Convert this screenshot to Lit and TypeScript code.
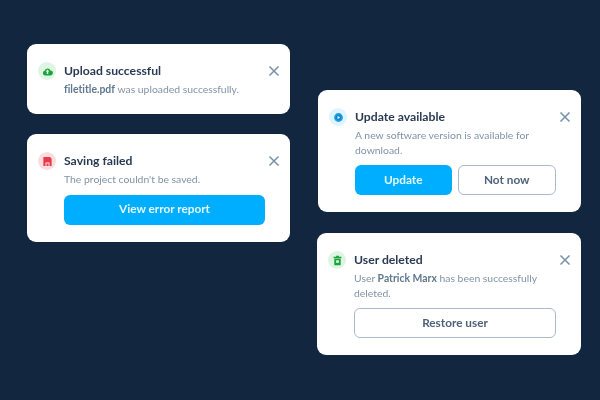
import { customElement } from "lit/decorators.js";
import { css, html, LitElement, svg } from "lit";

const cloudIcon = svg`<path fill="#1aa33a" d="M3.200 10.400a2.600 2.600 0 0 1-.3-5.100 3.300 3.300 0 0 1 6.300-.5 2.800 2.800 0 0 1-.2 5.600z"/><path fill="#e6f7e9" d="M6 3.800l2 2.300H6.800v2.600H5.200V6.100H4z"/>`;
const saveIcon = svg`<path fill="#e8394a" d="M1.500 1.200h7.300l1.700 1.700v7.900h-9z"/><path fill="#fbdcdf" d="M3.800 7h4.400v3.800H3.800z"/><path fill="#e8394a" d="M4.900 8.200h2.200v2.600H4.900z"/>`;
const updateIcon = svg`<circle cx="6" cy="6" r="4.800" fill="#1a9fe4"/><circle cx="6" cy="6" r="2.900" fill="#0f86cc"/><path fill="#dff4fe" d="M5 4l2.800 2L5 8z"/>`;
const trashIcon = svg`<path fill="#1aa33a" d="M4.500 .8h3V2h2.800v1.500H1.700V2h2.800zM2.500 4.200h7v6.900h-7z"/><path fill="#e6f7e9" d="M4.500 5.800h3v2.700h-3z"/>`;

@customElement("app-root")
export class AppRoot extends LitElement {
  private _icon(tone: string, glyph: unknown) {
    return html`<div class="icon ${tone}">
      <svg width="11" height="11" viewBox="0 0 12 12">${glyph}</svg>
    </div>`;
  }

  private _head(title: string) {
    return html`<div class="head">
      <div class="title">${title}</div>
      <svg class="close" width="12" height="12" viewBox="0 0 12 12">
        <path d="M1.500 1.500l9 9M10.500 1.500l-9 9" stroke="#7690a8" stroke-width="1.500" fill="none" />
      </svg>
    </div>`;
  }

  render() {
    return html`<div class="page">
      <div class="column left">
        <div class="card">
          ${this._icon("green", cloudIcon)}
          <div class="body">
            ${this._head("Upload successful")}
            <p><b>filetitle.pdf</b> was uploaded successfully.</p>
          </div>
        </div>
        <div class="card report">
          ${this._icon("red", saveIcon)}
          <div class="body">
            ${this._head("Saving failed")}
            <p>The project couldn't be saved.</p>
            <div class="actions">
              <button class="primary">View error report</button>
            </div>
          </div>
        </div>
      </div>
      <div class="column right">
        <div class="card">
          ${this._icon("blue", updateIcon)}
          <div class="body">
            ${this._head("Update available")}
            <p>A new software version is available for download.</p>
            <div class="actions">
              <button class="primary">Update</button>
              <button class="outline">Not now</button>
            </div>
          </div>
        </div>
        <div class="card shifted">
          ${this._icon("green", trashIcon)}
          <div class="body">
            ${this._head("User deleted")}
            <p>User <b>Patrick Marx</b> has been successfully deleted.</p>
            <div class="actions">
              <button class="outline">Restore user</button>
            </div>
          </div>
        </div>
      </div>
    </div>`;
  }

  static styles = css`
    :host {
      display: block;
      font-family: Lato, "Open Sans", sans-serif;
      font-variant-ligatures: none;
    }

    .page {
      display: flex;
      gap: 28px;
      box-sizing: border-box;
      width: 600px;
      height: 400px;
      padding-left: 27px;
      background: #12263f;
      overflow: hidden;
    }

    .column {
      display: flex;
      flex-direction: column;
      width: 263px;
      flex: none;
    }

    .left {
      gap: 20.5px;
      padding-top: 44px;
    }

    .right {
      gap: 21px;
      padding-top: 90px;
    }

    .card {
      display: flex;
      align-items: flex-start;
      gap: 8px;
      padding: 18px 25px 17px 11px;
      background: #fff;
      border-radius: 9px;
      filter: blur(0.4px);
    }

    .shifted {
      margin-left: -1px;
    }

    .report .actions {
      margin-top: 8px;
    }

    .icon {
      display: flex;
      align-items: center;
      justify-content: center;
      flex: none;
      width: 18px;
      height: 18px;
      border-radius: 50%;
    }

    .green {
      background: #dff5e3;
    }

    .red {
      background: #fbdcdf;
    }

    .blue {
      background: #dff4fe;
    }

    .body {
      flex: 1;
      min-width: 0;
    }

    .head {
      display: flex;
      align-items: center;
      justify-content: space-between;
      height: 18px;
    }

    .title {
      padding-bottom: 2px;
      font-size: 12.2px;
      font-weight: 700;
      color: #2a3a52;
    }

    .close {
      margin-right: -15px;
    }

    p {
      margin: 2px 0 0;
      font-size: 10.4px;
      line-height: 14.5px;
      color: #8093a8;
    }

    b {
      font-weight: 700;
      color: #5f7890;
    }

    .actions {
      display: flex;
      gap: 6px;
      margin-top: 8px;
    }

    button {
      flex: 1;
      box-sizing: border-box;
      height: 30px;
      padding: 0 0 2px;
      border-radius: 6px;
      font-family: inherit;
      font-size: 11.800px;
      font-weight: 700;
    }

    .primary {
      border: none;
      background: #00aeff;
      color: #e4f6ff;
    }

    .outline {
      border: 1.5px solid #aab9cc;
      background: #fff;
      color: #4f627a;
    }
  `;
}
